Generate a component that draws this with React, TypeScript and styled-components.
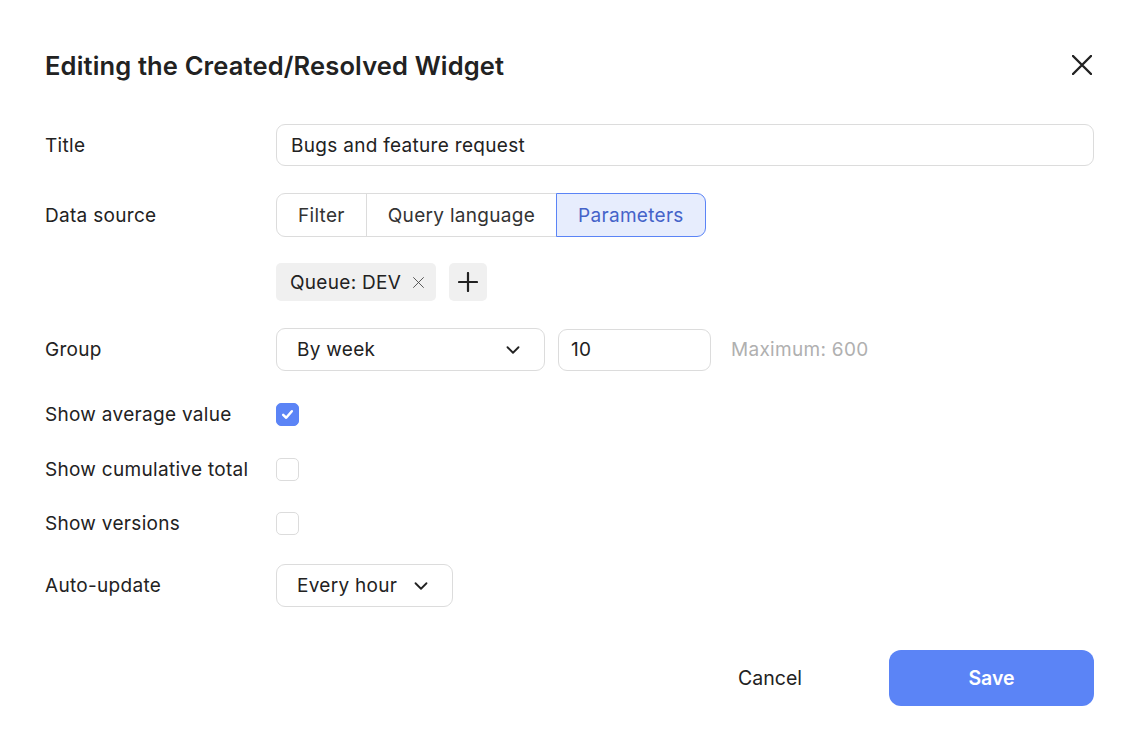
import React from 'react'
import styled, { createGlobalStyle } from 'styled-components'
import { ChevronDown } from 'lucide-react'

const ink = '#222222'
const line = '#dcdcdc'
const blue = '#5b84f6'

const GlobalStyle = createGlobalStyle`
  html, body {
    margin: 0;
    padding: 0;
    background: #fff;
  }
  body {
    font-family: Inter, 'Noto Sans', sans-serif;
    letter-spacing: 0.3px;
    color: ${ink};
  }
`

function CloseIcon({ size = 20, weight = 2.4 }: { size?: number; weight?: number }) {
  return (
    <svg width={size} height={size} viewBox="0 0 20 20" fill="none">
      <path d="M1 1L19 19M19 1L1 19" stroke="currentColor" strokeWidth={weight} strokeLinecap="round" />
    </svg>
  )
}

function PlusIcon() {
  return (
    <svg width="20" height="20" viewBox="0 0 20 20" fill="none">
      <path d="M10 1V19M1 10H19" stroke="currentColor" strokeWidth="2.2" strokeLinecap="round" />
    </svg>
  )
}

function CheckMark() {
  return (
    <svg width="13" height="13" viewBox="0 0 12 12" fill="none">
      <path d="M2 6.3L4.8 9L10 3" stroke="#fff" strokeWidth="2.3" strokeLinecap="round" strokeLinejoin="round" />
    </svg>
  )
}

export default function App() {
  return (
    <>
      <GlobalStyle />
      <Dialog>
        <Header>
          <Title>Editing the Created/Resolved Widget</Title>
          <CloseButton>
            <CloseIcon />
          </CloseButton>
        </Header>

        <Row $top={34} $height={42}>
          <Label>Title</Label>
          <TextField defaultValue="Bugs and feature request" />
        </Row>

        <Row $top={27} $height={44}>
          <Label>Data source</Label>
          <Segments>
            <Segment>Filter</Segment>
            <Segment>Query language</Segment>
            <Segment $active>Parameters</Segment>
          </Segments>
        </Row>

        <Row $top={26} $height={38}>
          <span />
          <Chips>
            <Chip>
              Queue: DEV
              <ChipClose>
                <CloseIcon size={11} weight={1.6} />
              </ChipClose>
            </Chip>
            <AddButton>
              <PlusIcon />
            </AddButton>
          </Chips>
        </Row>

        <Row $top={26} $height={45}>
          <Label>Group</Label>
          <Controls>
            <Select $width={269}>
              By week
              <ChevronDown size={22} strokeWidth={2} />
            </Select>
            <NumberField $width={153} defaultValue="10" />
            <Hint>Maximum: 600</Hint>
          </Controls>
        </Row>

        <Row $top={28} $height={28}>
          <Label>Show average value</Label>
          <Box $checked>
            <CheckMark />
          </Box>
        </Row>

        <Row $top={27} $height={28}>
          <Label>Show cumulative total</Label>
          <Box />
        </Row>

        <Row $top={26} $height={28}>
          <Label>Show versions</Label>
          <Box />
        </Row>

        <Row $top={27} $height={43}>
          <Label>Auto-update</Label>
          <Controls>
            <Select $width={177}>
              Every hour
              <ChevronDown size={22} strokeWidth={2} />
            </Select>
          </Controls>
        </Row>

        <Footer>
          <CancelButton>Cancel</CancelButton>
          <SaveButton>Save</SaveButton>
        </Footer>
      </Dialog>
    </>
  )
}

const Dialog = styled.div`
  width: 1136px;
  height: 752px;
  box-sizing: border-box;
  padding: 40px 42px 0 45px;
  display: flex;
  flex-direction: column;
`

const Header = styled.div`
  height: 50px;
  display: flex;
  align-items: center;
  justify-content: space-between;
`

const Title = styled.h1`
  margin: 0;
  font-size: 25.5px;
  font-weight: 600;
  letter-spacing: 0.15px;
  color: ${ink};
`

const CloseButton = styled.button`
  border: 0;
  background: none;
  padding: 0;
  margin-right: 2px;
  color: ${ink};
  display: flex;
  cursor: pointer;
`

const Row = styled.div<{ $top: number; $height: number }>`
  margin-top: ${(p) => p.$top}px;
  height: ${(p) => p.$height}px;
  display: grid;
  grid-template-columns: 231px 1fr;
  align-items: center;
`

const Label = styled.span`
  font-size: 19px;
  color: ${ink};
`

const TextField = styled.input`
  height: 42px;
  box-sizing: border-box;
  border: 1px solid ${line};
  border-radius: 9px;
  padding: 0 14px;
  font: inherit;
  font-size: 19px;
  letter-spacing: 0.3px;
  color: ${ink};
  outline: none;
`

const Segments = styled.div`
  display: flex;
  height: 44px;
  justify-self: start;
`

const Segment = styled.button<{ $active?: boolean }>`
  height: 44px;
  padding: 0 21px;
  font: inherit;
  font-size: 19px;
  letter-spacing: 0.3px;
  border: 1px solid ${(p) => (p.$active ? blue : line)};
  background: ${(p) => (p.$active ? '#e7edfd' : '#fff')};
  color: ${(p) => (p.$active ? '#4563c9' : '#333')};
  margin-left: -1px;
  cursor: pointer;

  &:first-child {
    margin-left: 0;
    border-radius: 9px 0 0 9px;
  }
  &:last-child {
    border-radius: 0 9px 9px 0;
  }
`

const Chips = styled.div`
  display: flex;
  gap: 13px;
`

const Chip = styled.div`
  height: 38px;
  display: flex;
  align-items: center;
  gap: 12px;
  padding: 0 12px 0 14px;
  background: #f0f0f0;
  border-radius: 5px;
  font-size: 19px;
`

const ChipClose = styled.span`
  display: flex;
  color: #444;
`

const AddButton = styled.button`
  width: 38px;
  height: 38px;
  border: 0;
  border-radius: 5px;
  background: #f0f0f0;
  color: ${ink};
  display: flex;
  align-items: center;
  justify-content: center;
  padding: 0;
`

const Controls = styled.div`
  display: flex;
  align-items: center;
  gap: 13px;
`

const Select = styled.div<{ $width: number }>`
  width: ${(p) => p.$width}px;
  height: 100%;
  min-height: 43px;
  box-sizing: border-box;
  display: flex;
  align-items: center;
  justify-content: space-between;
  padding: 0 20px;
  border: 1px solid ${line};
  border-radius: 9px;
  font-size: 19px;
  color: ${ink};
`

const NumberField = styled(TextField)<{ $width: number }>`
  width: ${(p) => p.$width}px;
  padding: 0 12px;
`

const Hint = styled.span`
  margin-left: 7px;
  font-size: 19px;
  color: #b0b0b0;
`

const Box = styled.span<{ $checked?: boolean }>`
  width: 23px;
  height: 23px;
  box-sizing: border-box;
  border-radius: 5px;
  border: 1px solid ${(p) => (p.$checked ? blue : line)};
  background: ${(p) => (p.$checked ? blue : '#fff')};
  display: flex;
  align-items: center;
  justify-content: center;
`

const Footer = styled.div`
  margin-top: 43px;
  height: 56px;
  display: flex;
  justify-content: flex-end;
  align-items: center;
  gap: 57px;
`

const CancelButton = styled.button`
  border: 0;
  background: none;
  font: inherit;
  font-size: 19.5px;
  color: ${ink};
  padding: 0 30px;
  cursor: pointer;
`

const SaveButton = styled.button`
  width: 205px;
  height: 56px;
  border: 0;
  border-radius: 12px;
  background: ${blue};
  color: #fff;
  font: inherit;
  font-size: 19.5px;
  font-weight: 600;
  cursor: pointer;
`
